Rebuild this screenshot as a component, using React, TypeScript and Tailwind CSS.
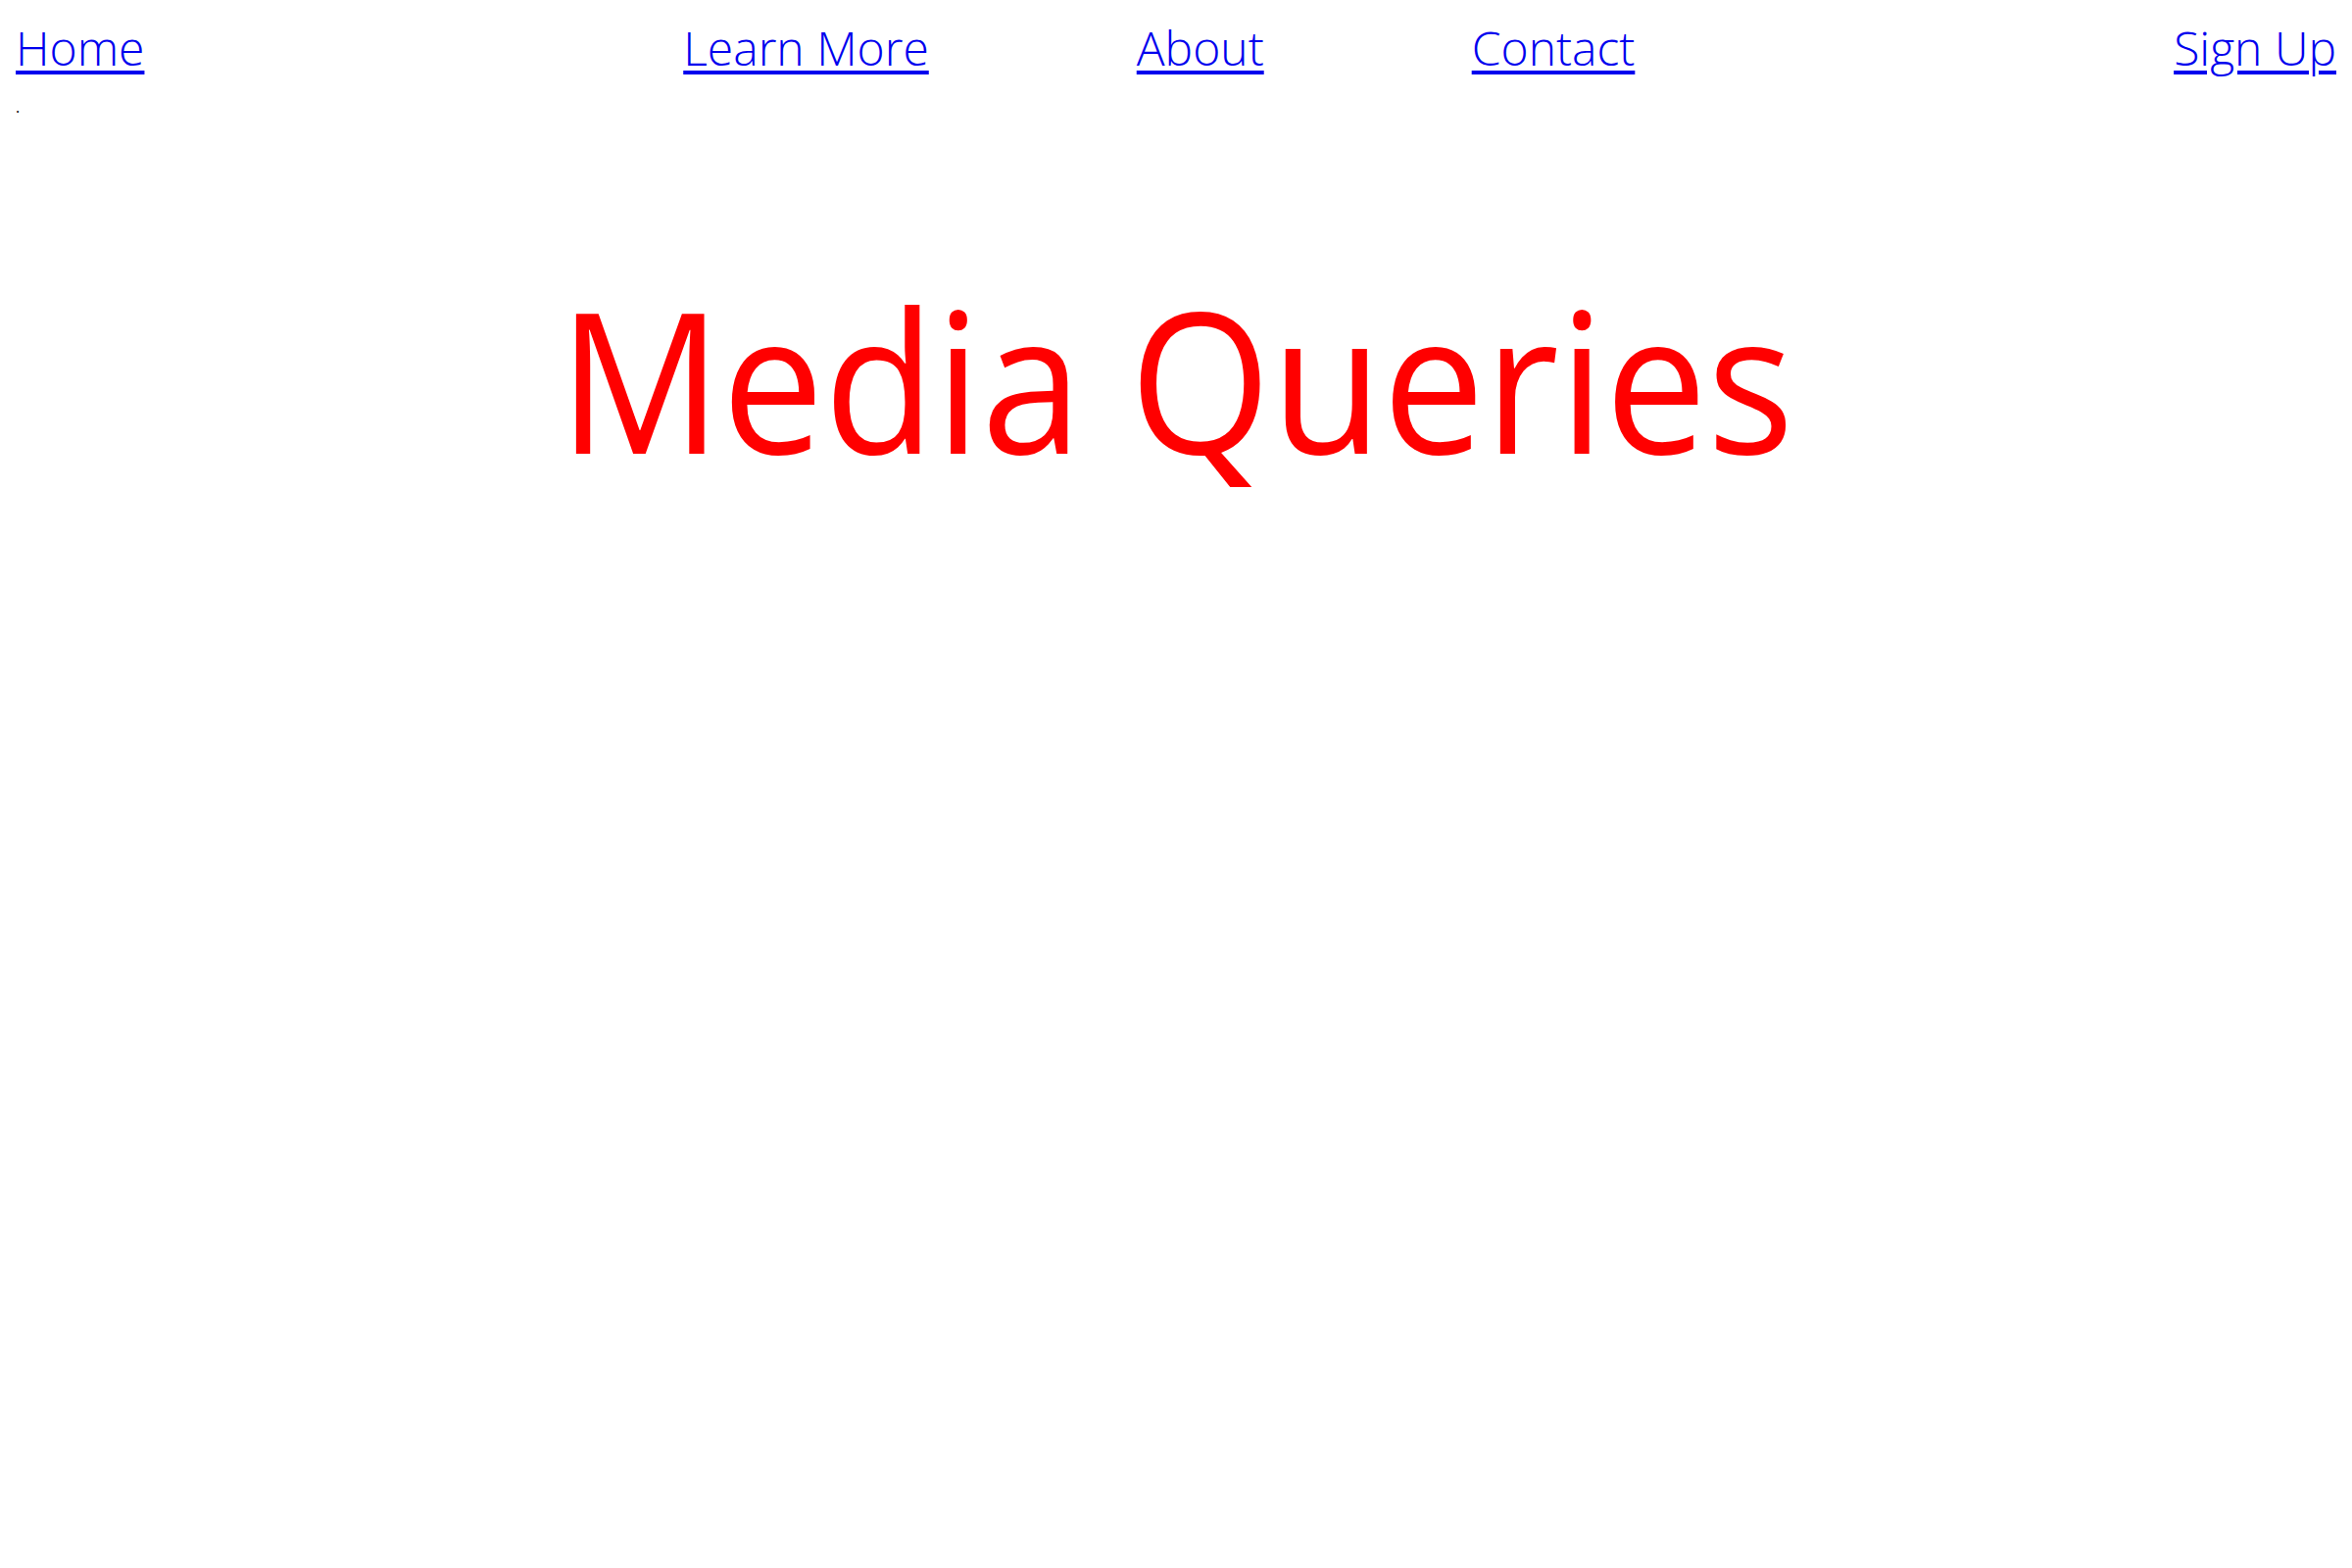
export default function App() {
  const links = ["Learn More", "About", "Contact"];

  return (
    <div className="min-h-screen bg-white text-black">
      <div className="font-['Open_Sans',sans-serif]">
        {/* ナビ */}
        <nav className="flex items-center justify-between p-4 text-[48px] leading-[normal] font-light">
          <a href="#" className="text-[#0000ee] underline decoration-4 underline-offset-[5px]">
            Home
          </a>
          <div className="flex gap-[212px]">
            {links.map((l) => (
              <a key={l} href="#" className="text-[#0000ee] underline decoration-4 underline-offset-[5px]">
                {l}
              </a>
            ))}
          </div>
          <a href="#" className="text-[#0000ee] underline decoration-4 underline-offset-[5px]">
            Sign Up
          </a>
        </nav>
        <p className="px-4 text-base">.</p>

        {/* 見出し */}
        <h1 className="mt-[128px] scale-x-[0.928] text-center text-[200px] font-normal leading-[normal] text-[#ff0000]">
          Media Queries
        </h1>
      </div>
    </div>
  );
}
